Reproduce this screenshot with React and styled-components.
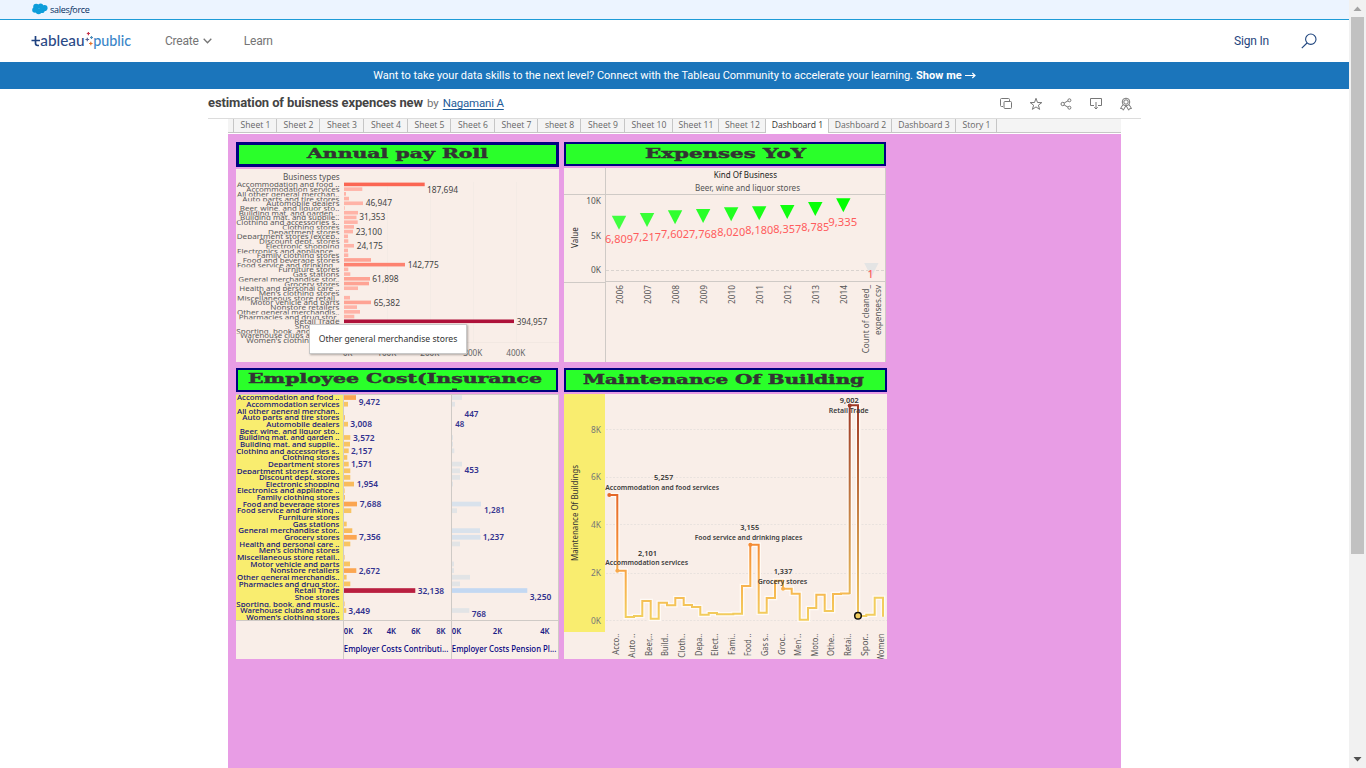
import React from "react";
import styled, { createGlobalStyle } from "styled-components";

const Global = createGlobalStyle`
  * { box-sizing: border-box; }
  html, body { margin: 0; height: 768px; overflow: hidden; background: #fff; }
  body { font-family: Roboto, "Liberation Sans", sans-serif; }
`;

const Shell = styled.div`display: flex; width: 1366px; height: 768px; overflow: hidden;`;
const Page = styled.div`width: 1349px; display: flex; flex-direction: column;`;
const BrandBar = styled.div`
  height: 20px; flex: none; background: #ecf4ff; border-bottom: 1px solid #1e9bd7;
  display: flex; align-items: center; gap: 2px; padding: 0 0 1px 32px;
  font: 500 9px/17px "Open Sans", sans-serif; color: #032d60; letter-spacing: -0.25px;
`;
const Nav = styled.nav`
  height: 42px; flex: none; display: flex; align-items: center; padding: 0 32px 0 31px;
`;
const NavLink = styled.a`
  display: flex; align-items: center; gap: 4px; margin-left: ${(p) => p.$gap}px;
  font-size: 12px; line-height: 16px; color: ${(p) => p.$color || "#757575"};
  letter-spacing: -0.2px;
`;
const Spacer = styled.div`flex: 1;`;
const Promo = styled.div`
  height: 27px; flex: none; background: #1b75bb; color: #fff;
  display: flex; justify-content: center; align-items: center; gap: 3px;
  font-size: 11px; line-height: 27px; letter-spacing: -0.02px; white-space: pre;
  b { font-weight: 700; letter-spacing: 0.05px; }
  i { font: 700 13px/24px "DejaVu Sans", sans-serif; width: 12px; }
`;
const TitleBar = styled.header`
  width: 933px; height: 30px; flex: none; margin-left: 208px; padding-right: 8px;
  border-bottom: 1px solid #dcdcdc; display: flex; align-items: center;
`;
const Title = styled.h1`
  margin: 0; font-size: 13px; line-height: 28px; color: #444; letter-spacing: -0.12px; padding-bottom: 1px;
`;
const By = styled.span`font-size: 11.5px; color: #757575; margin: 0 4px; padding-bottom: 1px;`;
const Author = styled.a`
  font-size: 11.5px; color: #1f5c99; text-decoration: underline; text-underline-offset: 2px;
  letter-spacing: -0.2px; padding-bottom: 1px;
`;
const Actions = styled.div`margin-left: auto; display: flex; gap: 16px;`;

const Viz = styled.main`width: 893px; margin-left: 228px; flex: 1; display: flex; flex-direction: column;`;
const Tabs = styled.div`
  height: 14px; flex: none; display: flex; background: #f4f4f4; border-bottom: 1px solid #c6c6c6; margin-bottom: 1px; padding-left: 5px;
`;
const Tab = styled.div`
  width: ${(p) => p.$w}px; height: ${(p) => (p.$on ? 14 : 13)}px; padding-left: 1px;
  border-left: 1px solid #c6c6c6; background: ${(p) => (p.$on ? "#fff" : "transparent")};
  color: ${(p) => (p.$on ? "#333" : "#666")}; text-align: center; white-space: nowrap;
  font: 8.6px/13px "Open Sans", sans-serif;
`;
const Dashboard = styled.div`
  flex: 1; background: #e89de5; padding: 8px; display: grid;
  grid-template-columns: 323px 323px; grid-template-rows: 220px 291px; column-gap: 5px; row-gap: 6px; align-content: start;
`;
const Card = styled.section`display: flex; flex-direction: column; gap: 2px; position: relative;`;
const CardTitle = styled.div`
  width: ${(p) => p.$w}px; height: ${(p) => p.$h}px; flex: none; background: #2aff2a;
  border: ${(p) => p.$b}px solid #000080; overflow: hidden;
  svg { display: block; width: 100%; height: 100%; }
  text { stroke: #333; stroke-width: 0.45px; }
`;
const Chart = styled.svg`display: block; flex: none; background: #f9eee8; font-family: "Noto Sans", sans-serif;`;
const Tooltip = styled.div`
  position: absolute; left: 73px; top: 182px; width: 158px; height: 30px; background: #fff;
  border: 1px solid #c8c8c8; box-shadow: 1px 1px 2px rgba(0,0,0,.3);
  svg { display: block; font-family: "Noto Sans", sans-serif; }
`;
const ScrollTrack = styled.div`
  width: 17px; height: 768px; background: #f1f1f1; display: flex; flex-direction: column; align-items: center;
`;
const ScrollArrow = styled.svg`display: block; width: 17px; height: 17px; flex: none;`;
const ScrollThumb = styled.div`width: 13px; height: 537px; background: #c1c1c1; margin-bottom: auto;`;

/* Text fitted between two x positions and centred on cy. */
function Fit({ a, b, cy, s = 8, fill = "#555", w = 400, family, children }) {
  return (
    <text x={a} y={cy + s * 0.357} fontSize={s} fontWeight={w} fill={fill} fontFamily={family}
      textLength={b - a} lengthAdjust="spacingAndGlyphs">{children}</text>
  );
}
/* Vertical text reading upwards between y positions. */
function Up({ cx, top, bottom, s = 8, fill = "#555", w = 400, children }) {
  return (
    <text transform={`translate(${cx + s * 0.357} ${bottom}) rotate(-90)`} fontSize={s} fontWeight={w}
      fill={fill} textLength={bottom - top} lengthAdjust="spacingAndGlyphs">{children}</text>
  );
}

const kinds = [
  ["Accommodation and food ..", 237], ["Accommodation services", 246.3], ["All other general merchan..", 237],
  ["Auto parts and tire stores", 242.3], ["Automobile dealers", 266.3], ["Beer, wine, and liquor sto..", 239.7],
  ["Building mat. and garden ..", 238.7], ["Building mat. and supplie..", 240], ["Clothing and accessories s..", 236.3],
  ["Clothing stores", 282.3], ["Department stores", 268], ["Department stores (excep..", 236.7],
  ["Discount dept. stores", 259], ["Electronic shopping", 265.7], ["Electronics and appliance ..", 237],
  ["Family clothing stores", 256.7], ["Food and beverage stores", 242.7], ["Food service and drinking ..", 237],
  ["Furniture stores", 278.3], ["Gas stations", 292.7], ["General merchandise stor..", 238.3],
  ["Grocery stores", 284.3], ["Health and personal care ..", 239.3], ["Men's clothing stores", 258.7],
  ["Miscellaneous store retail..", 237], ["Motor vehicle and parts", 250.3], ["Nonstore retailers", 270.3],
  ["Other general merchandis..", 237], ["Pharmacies and drug stor..", 238.7], ["Retail Trade", 294.3],
  ["Shoe stores", 294.7], ["Sporting, book, and  music..", 236.3], ["Warehouse clubs and sup..", 240.3],
  ["Women's clothing stores", 246.3],
];

/* Row headers, each one clipped to its own row height. */
function RowHeaders({ y0, pitch, fill, w, s = 8, dy = 0 }) {
  return kinds.map(([t, a], i) => (
    <svg key={i} x="236" y={y0 + i * pitch} width="107" height={pitch} viewBox={`236 ${y0 + i * pitch} 107 ${pitch}`}>
      <Fit a={a} b={339.5} cy={y0 + (i + 0.5) * pitch + dy} s={s} fill={fill} w={w}>{t}</Fit>
    </svg>
  ));
}

const payroll = [80.7, 18.3, 2, 5, 19, 0.7, 14, 12.5, 13.7, 10, 9, 4, 4.3, 10, 4, 4.3, 27, 61, 4.3, 6.3, 26, 25, 14, 0, 6, 27, 13, 16, 10.3, 170, 1, 8, 20, 5];
const payLabels = [
  ["187,694", 427, 458, 190], ["46,947", 365.7, 392, 203.3], ["31,353", 359.3, 385.3, 217.3], ["23,100", 355.7, 382, 232],
  ["24,175", 356.7, 382.7, 246], ["142,775", 407.7, 438.7, 264.8], ["61,898", 372.3, 398.7, 279], ["65,382", 373.7, 400, 302.8],
  ["394,957", 516.7, 547.3, 321.6],
];
const payColor = (v) => (v > 160 ? "#ae123a" : v > 70 ? "#fb6653" : v > 50 ? "#fd8270" : v > 22 ? "#fea394" : "#ffb3a7");

function PayrollChart() {
  return (
    <Chart width="323" height="193" viewBox="236 169 323 193">
      {[387, 430, 473, 516].map((x) => <path key={x} d={`M${x}.5 182V342`} stroke="#f4ebe5" />)}
      <path d="M344 342.5H559" stroke="#f2e8e2" />
      <Fit a={283} b={339.7} cy={176.8} s={8}>Business types</Fit>
      <RowHeaders y0={182.4} pitch={4.72} fill="#5a5a5a" s={7.8} dy={-0.1} />
      {payroll.map((v, i) => v > 0 && <rect key={i} x="344" y={182.6 + i * 4.72} width={v} height="3.6" fill={payColor(v)} />)}
      {payLabels.map(([t, a, b, y]) => <Fit key={t} a={a} b={b} cy={y} s={8.3} fill="#444">{t}</Fit>)}
      {["0K", "100K", "200K", "300K", "400K"].map((t, i) => (
        <Fit key={t} a={i ? 334.3 + i * 43 : 343} b={i ? 353.3 + i * 43 : 352.3} cy={353} s={8.2} fill="#666">{t}</Fit>
      ))}
    </Chart>
  );
}

const years = [
  [2006, 215.7, 239.7, "6,809"], [2007, 213, 237.7, "7,217"], [2008, 210.3, 234.7, "7,602"], [2009, 209, 234, "7,768"],
  [2010, 207.3, 232.7, "8,020"], [2011, 206.3, 230.7, "8,180"], [2012, 205, 229, "8,357"], [2013, 202, 227, "8,785"], [2014, 198.3, 222.7, "9,335"],
];

function ExpensesChart() {
  return (
    <Chart width="322" height="194" viewBox="564 168 322 194">
      <g stroke="#cfcac6" fill="none">
        <path d="M605.5 168V362M564 194.5H886M564 282.5H605M605 281.5H886M885.5 168V362" />
        <path d="M606 270.5H885" strokeDasharray="3 2" stroke="#d9d3cf" />
      </g>
      <Fit a={713.7} b={777} cy={175.2} fill="#222">Kind Of Business</Fit>
      <Fit a={695} b={800} cy={188.3} >Beer, wine and liquor stores</Fit>
      <Fit a={586.3} b={601} cy={201} >10K</Fit>
      <Fit a={591} b={601} cy={236} >5K</Fit>
      <Fit a={591} b={601} cy={270} >0K</Fit>
      <Up cx={575.3} top={227.3} bottom={248} fill="#222">Value</Up>
      {years.map(([yr, ty, ly, label], i) => {
        const x = 619 + i * 28.04;
        return (
          <g key={yr}>
            <path d={`M${x - 7.2} ${ty}h14.4l-7.2 14z`} fill={`rgb(${64 - i * 8},255,${64 - i * 8})`} />
            <Fit a={x - 14 + (i > 7 ? -1 : 0)} b={x + 14} cy={ly} s={10.6} fill="#ff5c5c">{label}</Fit>
            <Up cx={x + 1.3} top={285} bottom={304} >{yr}</Up>
          </g>
        );
      })}
      <path d="M864.2 263h14.4l-7.2 14z" fill="#e4e4e4" />
      <Fit a={867.5} b={873.5} cy={274} s={10} w={500} fill="#ff5c5c">1</Fit>
      <Up cx={866.3} top={285} bottom={353.3}>Count of cleaned_</Up>
      <Up cx={878.3} top={285} bottom={335}>expenses.csv</Up>
    </Chart>
  );
}

const contrib = [12, 4, 0, 1, 4, 0, 6.3, 6, 4.7, 3.3, 4.7, 6.3, 6.3, 10, 0.6, 1, 13, 7.3, 0, 2.7, 8.3, 12.7, 6.3, 0, 0.6, 6, 12.3, 2.6, 6.3, 71.3, 0, 0.6, 2.3, 0];
const pension = [10, 3, 0, 0, 0, 0, 1, 1, 2.3, 0, 10, 8, 8, 1, 0, 0, 29, 5, 0, 0, 28, 28.5, 8, 0, 0, 2, 2, 18, 8, 75.3, 0, 0, 17.3, 0];
const costLabels = [
  ["9,472", 358.7, 380, 402], ["3,008", 350.3, 372, 424.4], ["3,572", 353, 374.7, 438], ["2,157", 351, 372.3, 451],
  ["1,571", 351, 372.3, 464.3], ["1,954", 356.7, 378, 484.3], ["7,688", 359.7, 381.3, 504.3], ["7,356", 359, 380.7, 537.5],
  ["2,672", 358.7, 380, 571], ["32,138", 417.7, 444, 591], ["3,449", 348.3, 370, 611], ["447", 464.5, 478.5, 413.8],
  ["48", 455.3, 464.3, 424], ["453", 464.5, 478.7, 470.4], ["1,281", 484, 505, 510.4], ["1,237", 482.7, 504, 537.2],
  ["3,250", 529.7, 551.3, 597.2], ["768", 471.7, 486, 614.4],
];
const contribColor = (v) => (v > 60 ? "#b91f40" : v >= 11.5 ? "#fba651" : v > 8 ? "#f8bb5c" : "#f8c463");

function CostChart() {
  const axis = [["0K", 343.8], ["2K", 362.8], ["4K", 386.7], ["6K", 411.2], ["8K", 436.2], ["0K", 451.8], ["2K", 492.8], ["4K", 540.2]];
  return (
    <Chart width="323" height="265" viewBox="236 394 323 265">
      <rect x="236" y="394" width="107" height="226" fill="#f9ed6f" />
      <g stroke="#cfcac6"><path d="M236 394.5H559M343.5 394V659M451.5 394V659M558.5 394V659M236 620.5H559" /></g>
      <RowHeaders y0={394.2} pitch={6.655} fill="#10107c" w={500} s={7.5} dy={0.1} />
      {contrib.map((v, i) => v > 0 && <rect key={i} x="344" y={395.2 + i * 6.655} width={v} height="4.7" fill={contribColor(v)} />)}
      {pension.map((v, i) => v > 0 && <rect key={i} x="452" y={395.2 + i * 6.655} width={v} height="4.7" fill={v > 60 ? "#c3d8f2" : v > 25 ? "#d9e2ec" : "#e2e4e6"} />)}
      {costLabels.map(([t, a, b, y]) => <Fit key={t} a={a} b={b} cy={y} s={8.2} w={600} fill="#33338f">{t}</Fit>)}
      {axis.map(([t, x]) => <Fit key={x} a={x} b={x + 9.4} cy={631} s={8.2} w={600} fill="#1a1a85">{t}</Fit>)}
      <Fit a={343.8} b={448.3} cy={649.3} s={8} w={500} fill="#000080">Employer Costs Contributi...</Fit>
      <Fit a={451.8} b={556.3} cy={649.3} s={8} w={500} fill="#000080">Employer Costs Pension Pl...</Fit>
    </Chart>
  );
}

const linePath = "M609.3 495H617.3V570.7H625.7V617H634V616H642.3V601H650.7V618.7H658.7V602.7H667V605.3H675.3V598H683.7V605H692V607H700.3V614.7H708.7V613H717V614.3H733.3V613.7H742V586H750.3V544.7H758.7V612.7H766.7V598H775V580.7H783V588.7H791.7V593.7H799.7V619.7H808V608H816.3V594.7H824.7V611H833V594H841V593.5H849.7";
const peakPath = "M849.7 594V405.3H858V616";
const tailPath = "M858 616H866.3V614.7H874.7V597.7H883V616.7";
const marks = [
  ["5,257", 654, 673.3, 477.7, "Accommodation and food services", 605.3, 719],
  ["2,101", 638, 657, 553, "Accommodation services", 605.3, 688],
  ["3,155", 740.3, 759.3, 527.7, "Food service and drinking places", 694.7, 802.3],
  ["1,337", 773.7, 792.3, 571.7, "Grocery stores", 757.7, 807.3],
  ["9,002", 839.7, 858.7, 400.7, "Retail Trade", 828.7, 868.7],
];
const ticks = [
  ["Acco..", 654.7], ["Auto ..", 657.7], ["Beer,..", 656], ["Build..", 656], ["Cloth..", 657.7], ["Depa..", 656], ["Elect..", 656],
  ["Fami..", 655], ["Food ..", 656], ["Gas s..", 656], ["Groc..", 655], ["Men'..", 656], ["Moto..", 656.5], ["Othe..", 656],
  ["Retai..", 656], ["Spor..", 656], ["Women", 661],
];

function MaintenanceChart() {
  return (
    <Chart width="323" height="265" viewBox="564 394 323 265">
      <defs>
        <linearGradient id="low" gradientUnits="userSpaceOnUse" x1="0" y1="495" x2="0" y2="616">
          <stop offset="0" stopColor="#e4682a" /><stop offset=".4" stopColor="#f48a33" />
          <stop offset=".72" stopColor="#f8b04c" /><stop offset="1" stopColor="#f2cd5e" />
        </linearGradient>
        <linearGradient id="peak" gradientUnits="userSpaceOnUse" x1="0" y1="405" x2="0" y2="616">
          <stop offset="0" stopColor="#9e3a26" /><stop offset=".5" stopColor="#c47f45" /><stop offset="1" stopColor="#f0c65c" />
        </linearGradient>
      </defs>
      <rect x="564" y="394" width="41" height="238" fill="#f9ed6f" />
      {[430, 477.3, 525, 573, 621].map((y, i) => (
        <g key={y}>
          <path d={`M606 ${Math.floor(y) - 0.5 + (i % 2)}H887`} stroke="#e9e2de" strokeDasharray="2 1.5" />
          <Fit a={591} b={601} cy={y} fill="#777">{`${8 - 2 * i}K`}</Fit>
        </g>
      ))}
      <Up cx={575.3} top={465} bottom={561} fill="#333">Maintenance Of Buildings</Up>
      <path d={linePath + peakPath.replace("M", "L") + tailPath.replace("M", "L")} fill="none" stroke="#fffaf5" strokeWidth="4.6" />
      <path d={linePath} fill="none" stroke="url(#low)" strokeWidth="2" />
      <path d={peakPath} fill="none" stroke="url(#peak)" strokeWidth="2" />
      <path d={tailPath} fill="none" stroke="#f2cd5e" strokeWidth="2" />
      <circle cx="609.3" cy="495" r="2" fill="#e4682a" />
      <circle cx="617.3" cy="570.7" r="2" fill="#f8a84a" />
      <circle cx="750.3" cy="544.7" r="2" fill="#f48a33" />
      <circle cx="783" cy="588.7" r="2" fill="#f8b04c" />
      <circle cx="849.7" cy="405.5" r="2" fill="#9e3a26" />
      <circle cx="858" cy="615.8" r="3.3" fill="#f2cd5e" stroke="#111" strokeWidth="1.5" />
      {marks.map(([v, a, b, y, name, c, d]) => (
        <g key={v}>
          <Fit a={a} b={b} cy={y} s={7.4} w={600} fill="#333">{v}</Fit>
          <Fit a={c} b={d} cy={y + 9.7} s={7.6} w={600} fill="#3c3c3c">{name}</Fit>
        </g>
      ))}
      {ticks.map(([t, bottom], i) => <Up key={t} cx={615.7 + i * 16.6} top={633.7} bottom={bottom} s={8.3}>{t}</Up>)}
    </Chart>
  );
}

function Heading({ w, h, b, a, e, y = 11, extra, children }) {
  return (
    <CardTitle $w={w} $h={h} $b={b}>
      <svg>
        <Fit a={a} b={e} cy={y} s={13} w={700} fill="#333" family='"DejaVu Serif", serif'>{children}</Fit>
        {extra}
      </svg>
    </CardTitle>
  );
}

const tabs = [
  ["Sheet 1", 43], ["Sheet 2", 43], ["Sheet 3", 44], ["Sheet 4", 44], ["Sheet 5", 43], ["Sheet 6", 44], ["Sheet 7", 43], ["sheet 8", 43],
  ["Sheet 9", 44], ["Sheet 10", 48], ["Sheet 11", 46], ["Sheet 12", 47], ["Dashboard 1", 63], ["Dashboard 2", 63], ["Dashboard 3", 64], ["Story 1", 41], ["", 1],
];

const actionPaths = [
  "M4 9.500H2.500a1 1 0 0 1-1-1V2.500a1 1 0 0 1 1-1h7a1 1 0 0 1 1 1V4M6 4.500h5.500a1 1 0 0 1 1 1v5a1 1 0 0 1-1 1H6a1 1 0 0 1-1-1v-5a1 1 0 0 1 1-1z",
  "M7 1.300l1.500 4.200 4.300.1-3.400 2.600 1.200 4.200L7 9.900l-3.600 2.500 1.200-4.200L1.200 5.600l4.300-.1z",
  "M5.200 6L9 3.800M5.200 8L9 10.200M5.400 7a1.700 1.700 0 1 1-3.400 0 1.700 1.700 0 0 1 3.400 0zM11.900 3.300a1.500 1.500 0 1 1-3 0 1.500 1.500 0 0 1 3 0zM11.900 10.700a1.500 1.500 0 1 1-3 0 1.500 1.500 0 0 1 3 0z",
  "M5 8.500H1.500v-7h11v7H9M7 5v7M5.300 10.300L7 12l1.700-1.700",
  "M10.800 5a3.800 3.800 0 1 1-7.600 0 3.800 3.800 0 0 1 7.600 0zM9.200 5a2.200 2.200 0 1 1-4.400 0 2.200 2.200 0 0 1 4.400 0zM4 7.500l-2.500 4 2 .2.800 1.500L6.700 9M10 7.500l2.500 4-2 .2-.8 1.500L7.300 9",
];

function Cloud() {
  return (
    <svg width="16" height="12" viewBox="0 0 16 12" fill="#0d9dda">
      <circle cx="4.200" cy="3.800" r="3" /><circle cx="8.600" cy="3.200" r="2.700" /><circle cx="12.500" cy="5" r="3.100" />
      <circle cx="3" cy="7" r="2.800" /><circle cx="6.600" cy="8.300" r="2.900" /><circle cx="10" cy="7.200" r="2.800" />
    </svg>
  );
}

function Logo() {
  const f = 'Lato, sans-serif';
  return (
    <svg width="101" height="24" viewBox="31 29 101 24">
      <path d="M31.500 40.500h8.500M35.500 36v7.300q0 2.200 2.200 2.200h1.300" fill="none" stroke="#1f4280" strokeWidth="1.700" />
      <Fit a={40.300} b={84.500} cy={40.800} s={15} w={500} fill="#2b4a86" family={f}>ableau</Fit>
      <Fit a={93.200} b={131} cy={40.800} s={15} w={500} fill="#3a86c8" family={f}>public</Fit>
      <g strokeWidth="1.200">
        <path d="M85.500 39.500h3.600M87.300 37.700v3.600" stroke="#5b6591" />
        <path d="M86.800 33.500h3.200M88.400 32v3.200" stroke="#c8354c" />
        <path d="M90 37.500h3M91.500 36v3" stroke="#4f8fb9" />
        <path d="M89 43.500h3.600M90.800 41.700v3.600" stroke="#e8762c" />
      </g>
    </svg>
  );
}

export default function App() {
  return (
    <Shell>
      <Global />
      <Page>
        <BrandBar><Cloud /><span>sales<em>f</em>orce</span></BrandBar>
        <Nav>
          <Logo />
          <NavLink $gap={33}>Create
            <svg width="9" height="6" viewBox="0 0 9 6" fill="none" stroke="#757575" strokeWidth="1.300"><path d="M.7.8l3.800 4L8.300.8" /></svg>
          </NavLink>
          <NavLink $gap={32}>Learn</NavLink>
          <Spacer />
          <NavLink $color="#1f457e">Sign In</NavLink>
          <NavLink $gap={32}>
            <svg width="16" height="16" viewBox="0 0 16 16" fill="none" stroke="#1f457e" strokeWidth="1.100"><circle cx="9.800" cy="6.200" r="5.200" /><path d="M6 10L.8 15.200" /></svg>
          </NavLink>
        </Nav>
        <Promo>
          <span>Want to take your data skills to the next level? Connect with the Tableau Community to accelerate your learning.</span>
          <b>Show me</b>
          <svg width="11" height="7" viewBox="0 0 11 7" fill="none" stroke="#fff" strokeWidth="1.200"><path d="M0 3.500h10M7.300 1l2.700 2.500L7.300 6" /></svg>
        </Promo>
        <TitleBar>
          <Title>estimation of buisness expences new</Title><By>by</By><Author>Nagamani A</Author>
          <Actions>
            {actionPaths.map((d) => <svg key={d} width="14" height="14" viewBox="0 0 14 14" fill="none" stroke="#777"><path d={d} /></svg>)}
          </Actions>
        </TitleBar>
        <Viz>
          <Tabs>{tabs.map(([t, w]) => <Tab key={t} $w={w} $on={t === "Dashboard 1"}>{t}</Tab>)}</Tabs>
          <Dashboard>
            <Card>
              <Heading w={323} h={25} b={3} a={68} e={249} y={8.500}>Annual pay Roll</Heading>
              <PayrollChart />
              <Tooltip>
                <svg width="156" height="28"><Fit a={8.700} b={147.300} cy={14} s={8.700} fill="#333">Other general merchandise stores</Fit></svg>
              </Tooltip>
            </Card>
            <Card>
              <Heading w={322} h={24} b={2} a={79} e={240} y={9.500}>Expenses YoY</Heading>
              <ExpensesChart />
            </Card>
            <Card>
              <Heading w={322} h={24} b={2} a={10} e={304} y={8} extra={<path d="M214 20v-1.500h5V20z" fill="#333" />}>Employee Cost(Insurance</Heading>
              <CostChart />
            </Card>
            <Card>
              <Heading w={323} h={24} b={2} a={17} e={298} y={9.500}>Maintenance Of Building</Heading>
              <MaintenanceChart />
            </Card>
          </Dashboard>
        </Viz>
      </Page>
      <ScrollTrack>
        <ScrollArrow viewBox="0 0 17 17"><path d="M4.500 11L8.500 6.500 12.500 11z" fill="#a3a3a3" /></ScrollArrow>
        <ScrollThumb />
        <ScrollArrow viewBox="0 0 17 17"><path d="M4.500 6L8.500 10.500 12.500 6z" fill="#505050" /></ScrollArrow>
      </ScrollTrack>
    </Shell>
  );
}
